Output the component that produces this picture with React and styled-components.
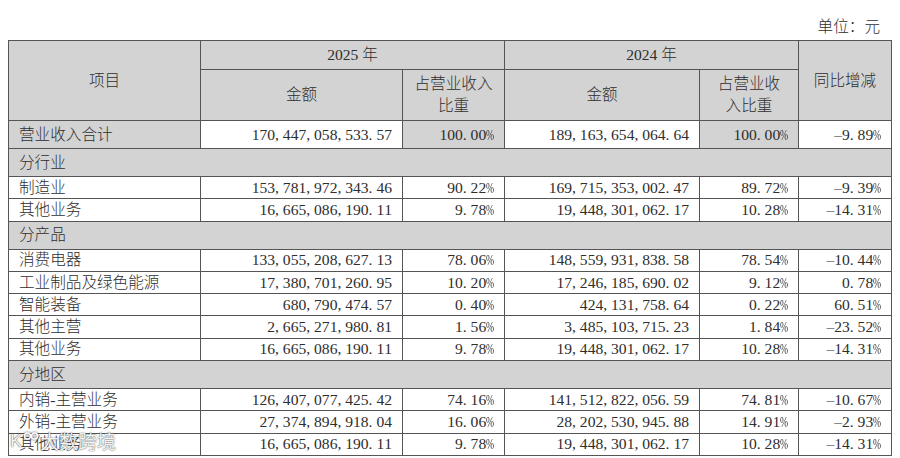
import React from "react";
import styled, { createGlobalStyle } from "styled-components";

const GlobalStyle = createGlobalStyle`
  body {
    margin: 0;
    background: #ffffff;
  }
`;

const rows = [
  { type: "total", label: "营业收入合计", a: "170,447,058,533.57", b: "100.00%", c: "189,163,654,064.64", d: "100.00%", e: "–9.89%" },
  { type: "section", label: "分行业" },
  { label: "制造业", a: "153,781,972,343.46", b: "90.22%", c: "169,715,353,002.47", d: "89.72%", e: "–9.39%" },
  { label: "其他业务", a: "16,665,086,190.11", b: "9.78%", c: "19,448,301,062.17", d: "10.28%", e: "–14.31%" },
  { type: "section", label: "分产品" },
  { label: "消费电器", a: "133,055,208,627.13", b: "78.06%", c: "148,559,931,838.58", d: "78.54%", e: "–10.44%" },
  { label: "工业制品及绿色能源", a: "17,380,701,260.95", b: "10.20%", c: "17,246,185,690.02", d: "9.12%", e: "0.78%" },
  { label: "智能装备", a: "680,790,474.57", b: "0.40%", c: "424,131,758.64", d: "0.22%", e: "60.51%" },
  { label: "其他主营", a: "2,665,271,980.81", b: "1.56%", c: "3,485,103,715.23", d: "1.84%", e: "–23.52%" },
  { label: "其他业务", a: "16,665,086,190.11", b: "9.78%", c: "19,448,301,062.17", d: "10.28%", e: "–14.31%" },
  { type: "section", label: "分地区" },
  { label: "内销-主营业务", a: "126,407,077,425.42", b: "74.16%", c: "141,512,822,056.59", d: "74.81%", e: "–10.67%" },
  { label: "外销-主营业务", a: "27,374,894,918.04", b: "16.06%", c: "28,202,530,945.88", d: "14.91%", e: "–2.93%" },
  { label: "其他业务", a: "16,665,086,190.11", b: "9.78%", c: "19,448,301,062.17", d: "10.28%", e: "–14.31%" },
];

const GRAY = "#d3d3d3";

function App() {
  return (
    <Page>
      <GlobalStyle />
      <Unit>单位：元</Unit>
      <Frame>
        <Table>
          <colgroup>
            <col style={{ width: 192 }} />
            <col style={{ width: 202 }} />
            <col style={{ width: 102 }} />
            <col style={{ width: 195 }} />
            <col style={{ width: 99 }} />
            <col style={{ width: 93 }} />
          </colgroup>
          <thead>
            <HeadRow $h={29}>
              <Head rowSpan={2}>项目</Head>
              <Head colSpan={2}>2025 年</Head>
              <Head colSpan={2}>2024 年</Head>
              <Head rowSpan={2}>同比增减</Head>
            </HeadRow>
            <HeadRow $h={51}>
              <Head>金额</Head>
              <Head>
                占营业收入
                <br />
                比重
              </Head>
              <Head>金额</Head>
              <Head>
                占营业收
                <br />
                入比重
              </Head>
            </HeadRow>
          </thead>
          <tbody>
            {rows.map((r, i) => {
              if (r.type === "section") {
                return (
                  <BodyRow key={i} $h={28}>
                    <Cell colSpan={6} $bg={GRAY}>
                      {r.label}
                    </Cell>
                  </BodyRow>
                );
              }
              const total = r.type === "total";
              return (
                <BodyRow key={i} $h={total ? 28 : 22.3}>
                  <Cell $bg={total ? GRAY : "#fff"}>{r.label}</Cell>
                  <Cell $right>
                    <Num value={r.a} />
                  </Cell>
                  <Cell $right $bg={total ? GRAY : "#fff"}>
                    <Num value={r.b} />
                  </Cell>
                  <Cell $right>
                    <Num value={r.c} />
                  </Cell>
                  <Cell $right $bg={total ? GRAY : "#fff"}>
                    <Num value={r.d} />
                  </Cell>
                  <Cell $right>
                    <Num value={r.e} />
                  </Cell>
                </BodyRow>
              );
            })}
          </tbody>
        </Table>
        <Watermark>
          <Mark>K</Mark>
          <svg width="16" height="12" viewBox="0 0 16 12">
            <circle cx="4.5" cy="5" r="3" fill="none" stroke="#fff" strokeWidth="1.6" />
            <circle cx="11.5" cy="5" r="3" fill="none" stroke="#fff" strokeWidth="1.6" />
          </svg>
          <span>大数跨境</span>
        </Watermark>
      </Frame>
    </Page>
  );
}

function Num({ value }) {
  return (
    <span>
      {value.split("").map((ch, i) => (
        <Glyph key={i} $squeeze={ch === "%"}>
          {ch}
        </Glyph>
      ))}
    </span>
  );
}

const Page = styled.div`
  width: 900px;
  height: 458px;
  overflow: hidden;
  font-family: "Liberation Serif", "Noto Sans CJK SC", serif;
  font-size: 15.6px;
  font-weight: 300;
  color: #2e2e2e;
`;

const Unit = styled.div`
  height: 40px;
  box-sizing: border-box;
  padding: 18px 20px 0 0;
  line-height: 18px;
  text-align: right;
`;

const Frame = styled.div`
  position: relative;
  margin-left: 8px;
  width: 883px;
`;

const Table = styled.table`
  width: 883px;
  table-layout: fixed;
  border-collapse: collapse;
  border: 1px solid #4d4d4d;
`;

const HeadRow = styled.tr`
  height: ${(p) => p.$h}px;
`;

const BodyRow = styled.tr`
  height: ${(p) => p.$h}px;
`;

const Head = styled.th`
  background: ${GRAY};
  border: 1px solid #555;
  font-weight: 300;
  line-height: 22px;
  padding: 0 4px;
  text-align: center;
  vertical-align: middle;
`;

const Cell = styled.td`
  background: ${(p) => p.$bg || "#fff"};
  border: 1px solid #555;
  padding: 0 10px;
  line-height: 20px;
  white-space: nowrap;
  text-align: ${(p) => (p.$right ? "right" : "left")};
  vertical-align: middle;
`;

const Glyph = styled.span`
  display: inline-block;
  width: 0.5em;
  text-align: left;
  font-weight: 400;
  ${(p) =>
    p.$squeeze &&
    `
    transform: scaleX(0.62);
    transform-origin: left center;
  `}
`;

const Watermark = styled.div`
  position: absolute;
  left: 2px;
  bottom: 4px;
  display: flex;
  align-items: center;
  gap: 1px;
  color: rgba(255, 255, 255, 0.95);
  font-family: "Noto Sans CJK SC", sans-serif;
  font-size: 19px;
  font-weight: 400;
  line-height: 22px;
  text-shadow: 0 0 1px rgba(0, 0, 0, 0.7), 0 0 2px rgba(0, 0, 0, 0.35);
  svg {
    margin-top: -8px;
    filter: drop-shadow(0 0 1px rgba(0, 0, 0, 0.7));
  }
`;

const Mark = styled.span`
  font-family: "Liberation Sans", sans-serif;
  font-size: 18px;
`;

export default App;
